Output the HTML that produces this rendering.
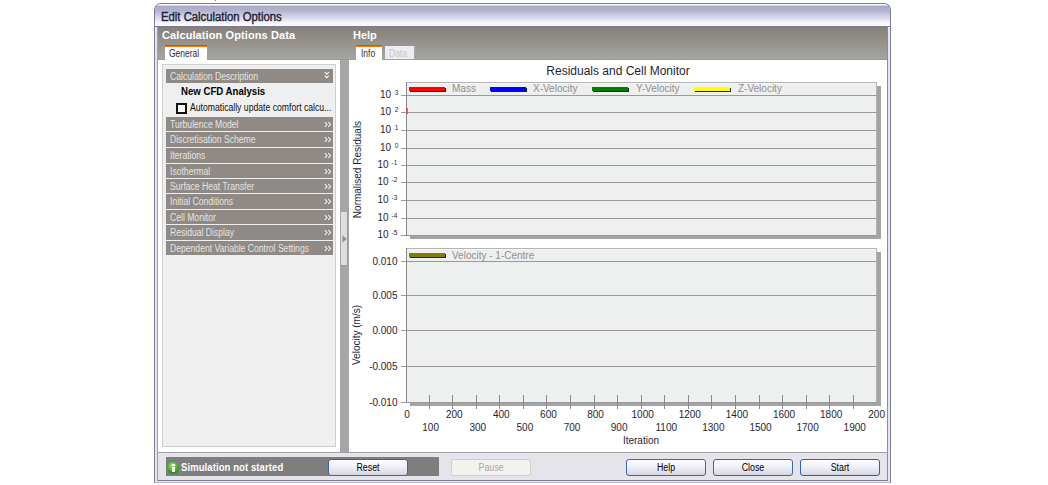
<!DOCTYPE html>
<html><head><meta charset="utf-8">
<style>
*{margin:0;padding:0;box-sizing:border-box}
html,body{width:1048px;height:485px;background:#fff;overflow:hidden;font-family:"Liberation Sans",sans-serif}
.a{position:absolute}
.t{white-space:nowrap;transform-origin:0 0;line-height:1}
.bar{position:absolute;left:166px;width:167px;background:#8f8a85}
.btn{position:absolute;top:459px;height:17px;width:80px;border:1px solid #3a68a0;border-radius:3px;background:linear-gradient(#fdfdff,#f0f0f8 45%,#dcdce8 90%,#cfd0de)}
.btn span{position:absolute;left:0;right:0;top:3px;text-align:center;font-size:10px;color:#000;line-height:1}
</style></head><body>
<div class="a" style="left:154px;top:3px;width:737px;height:480px;border:1px solid #7c7c98;border-bottom-color:#b8b8c4;border-radius:7px 7px 0 0;background:#e6e6ee"></div>
<div class="a" style="left:157px;top:26px;width:731px;height:455px;border-left:1px solid #9a9ab0;border-right:1px solid #8a8aa2;border-bottom:1px solid #7c7c98;background:#e4e4ea"></div>
<div class="a" style="left:155px;top:4px;width:735px;height:22px;border-radius:6px 6px 0 0;background:linear-gradient(#fdfdff,#fdfdff 1px,#a9a9c8 2px,#b4b4d0 30%,#d8d8e8 62%,#f6f6fa 85%,#fbfbfd)"></div>
<div class="a" style="left:155px;top:26px;width:735px;height:1px;background:#7a7a98"></div>
<div class="a t" style="left:161px;top:10.5px;font-size:12.5px;font-weight:normal;color:#25253a;transform:scaleX(0.905);-webkit-text-stroke:0.45px #25253a;letter-spacing:0px">Edit Calculation Options</div>
<div class="a" style="left:158px;top:27px;width:729px;height:426px;background:linear-gradient(#867f79,#9a9793 20px,#a8a7a4 34px,#a8a7a4)"></div>
<div class="a" style="left:158px;top:59px;width:729px;height:1px;background:#9a9996"></div>
<div class="a t" style="left:162px;top:30px;font-size:11px;font-weight:bold;color:#fff;transform:scaleX(1.0);letter-spacing:0.1px">Calculation Options Data</div>
<div class="a t" style="left:353px;top:30px;font-size:11px;font-weight:bold;color:#fff;transform:scaleX(1.0);">Help</div>
<div class="a" style="left:165px;top:45px;width:42px;height:15px;background:linear-gradient(#ff2400,#ff5a00 1px,#ff9000 2px,#fff 2px,#fff 3px)"></div>
<div class="a t" style="left:169px;top:49px;font-size:10px;font-weight:normal;color:#2a2a40;transform:scaleX(0.85);">General</div>
<div class="a" style="left:158px;top:60px;width:182px;height:392px;background:#fff"></div>
<div class="a" style="left:162px;top:64px;width:174px;height:383px;background:#efefef;border:1px solid #cfcfcf"></div>
<div class="bar" style="top:69px;height:14px"></div>
<div class="a t" style="left:170px;top:72px;font-size:10px;font-weight:normal;color:#e6e4e2;transform:scaleX(0.86);">Calculation Description</div>
<svg class="a" style="left:324px;top:71px" width="6" height="8"><path d="M0.8 1.2 L2.8 3.2 L4.8 1.2 M0.8 4.6 L2.8 6.6 L4.8 4.6" stroke="#fbfbfb" stroke-width="1.1" fill="none"/></svg>
<div class="a t" style="left:181px;top:86px;font-size:11px;font-weight:bold;color:#000;transform:scaleX(0.875);">New CFD Analysis</div>
<div class="a" style="left:176px;top:103px;width:11px;height:11px;border:2px solid #111;background:#fff"></div>
<div class="a t" style="left:190px;top:103px;font-size:10px;font-weight:normal;color:#111;transform:scaleX(0.865);">Automatically update comfort calcu...</div>
<div class="bar" style="top:117px;height:14px"></div>
<div class="a t" style="left:170px;top:120px;font-size:10px;font-weight:normal;color:#e6e4e2;transform:scaleX(0.86);">Turbulence Model</div>
<svg class="a" style="left:324px;top:121px" width="8" height="7"><path d="M0.8 1 L3 3.5 L0.8 6 M4.3 1 L6.5 3.5 L4.3 6" stroke="#fbfbfb" stroke-width="1.1" fill="none"/></svg>
<div class="bar" style="top:132px;height:15px"></div>
<div class="a t" style="left:170px;top:135px;font-size:10px;font-weight:normal;color:#e6e4e2;transform:scaleX(0.86);">Discretisation Scheme</div>
<svg class="a" style="left:324px;top:136px" width="8" height="7"><path d="M0.8 1 L3 3.5 L0.8 6 M4.3 1 L6.5 3.5 L4.3 6" stroke="#fbfbfb" stroke-width="1.1" fill="none"/></svg>
<div class="bar" style="top:148px;height:15px"></div>
<div class="a t" style="left:170px;top:151px;font-size:10px;font-weight:normal;color:#e6e4e2;transform:scaleX(0.86);">Iterations</div>
<svg class="a" style="left:324px;top:152px" width="8" height="7"><path d="M0.8 1 L3 3.5 L0.8 6 M4.3 1 L6.5 3.5 L4.3 6" stroke="#fbfbfb" stroke-width="1.1" fill="none"/></svg>
<div class="bar" style="top:164px;height:14px"></div>
<div class="a t" style="left:170px;top:167px;font-size:10px;font-weight:normal;color:#e6e4e2;transform:scaleX(0.86);">Isothermal</div>
<svg class="a" style="left:324px;top:168px" width="8" height="7"><path d="M0.8 1 L3 3.5 L0.8 6 M4.3 1 L6.5 3.5 L4.3 6" stroke="#fbfbfb" stroke-width="1.1" fill="none"/></svg>
<div class="bar" style="top:179px;height:14px"></div>
<div class="a t" style="left:170px;top:182px;font-size:10px;font-weight:normal;color:#e6e4e2;transform:scaleX(0.86);">Surface Heat Transfer</div>
<svg class="a" style="left:324px;top:183px" width="8" height="7"><path d="M0.8 1 L3 3.5 L0.8 6 M4.3 1 L6.5 3.5 L4.3 6" stroke="#fbfbfb" stroke-width="1.1" fill="none"/></svg>
<div class="bar" style="top:194px;height:15px"></div>
<div class="a t" style="left:170px;top:197px;font-size:10px;font-weight:normal;color:#e6e4e2;transform:scaleX(0.86);">Initial Conditions</div>
<svg class="a" style="left:324px;top:198px" width="8" height="7"><path d="M0.8 1 L3 3.5 L0.8 6 M4.3 1 L6.5 3.5 L4.3 6" stroke="#fbfbfb" stroke-width="1.1" fill="none"/></svg>
<div class="bar" style="top:210px;height:14px"></div>
<div class="a t" style="left:170px;top:213px;font-size:10px;font-weight:normal;color:#e6e4e2;transform:scaleX(0.86);">Cell Monitor</div>
<svg class="a" style="left:324px;top:214px" width="8" height="7"><path d="M0.8 1 L3 3.5 L0.8 6 M4.3 1 L6.5 3.5 L4.3 6" stroke="#fbfbfb" stroke-width="1.1" fill="none"/></svg>
<div class="bar" style="top:225px;height:15px"></div>
<div class="a t" style="left:170px;top:228px;font-size:10px;font-weight:normal;color:#e6e4e2;transform:scaleX(0.86);">Residual Display</div>
<svg class="a" style="left:324px;top:229px" width="8" height="7"><path d="M0.8 1 L3 3.5 L0.8 6 M4.3 1 L6.5 3.5 L4.3 6" stroke="#fbfbfb" stroke-width="1.1" fill="none"/></svg>
<div class="bar" style="top:241px;height:14px"></div>
<div class="a t" style="left:170px;top:244px;font-size:10px;font-weight:normal;color:#e6e4e2;transform:scaleX(0.86);">Dependent Variable Control Settings</div>
<svg class="a" style="left:324px;top:245px" width="8" height="7"><path d="M0.8 1 L3 3.5 L0.8 6 M4.3 1 L6.5 3.5 L4.3 6" stroke="#fbfbfb" stroke-width="1.1" fill="none"/></svg>
<div class="a" style="left:340px;top:60px;width:9px;height:392px;background:#a6a6a6"></div>
<div class="a" style="left:341px;top:212px;width:7px;height:54px;background:#dddde2;border-right:1px solid #9a9a9a;border-bottom:1px solid #9a9a9a"></div>
<svg class="a" style="left:342px;top:235px" width="5" height="8"><path d="M0.5 0.5 L4.5 4 L0.5 7.5 Z" fill="#8a8a8a"/></svg>
<div class="a" style="left:356px;top:45px;width:26px;height:15px;background:linear-gradient(#ff2400,#ff5a00 1px,#ff9000 2px,#fff 2px,#fff 3px)"></div>
<div class="a t" style="left:361px;top:49px;font-size:10px;font-weight:normal;color:#34344a;transform:scaleX(0.85);">Info</div>
<div class="a" style="left:385px;top:46px;width:31px;height:14px;background:#ededf1;border-right:2px solid #a4a4a4;border-bottom:1px solid #a4a4a4"></div>
<div class="a t" style="left:389px;top:49px;font-size:10px;font-weight:normal;color:#c4c4ca;transform:scaleX(0.85);">Data</div>
<div class="a" style="left:349px;top:60px;width:538px;height:392px;background:#fff"></div>
<div class="a" style="left:157px;top:452px;width:731px;height:1px;background:#a0a0a8"></div>
<svg class="a" style="left:0;top:0" width="1048" height="485" font-family="Liberation Sans, sans-serif" shape-rendering="crispEdges">
<text x="618" y="75" font-size="12" text-anchor="middle" fill="#1e1e36" shape-rendering="auto">Residuals and Cell Monitor</text>
<rect x="410" y="235" width="471" height="4" fill="#a4a4a4"/>
<rect x="877" y="86" width="4" height="153" fill="#a4a4a4"/>
<rect x="406" y="82" width="471" height="153" fill="#eef0ef"/>
<rect x="406" y="82" width="471" height="1" fill="#b4b4b4"/>
<rect x="407" y="83" width="470" height="1" fill="#f6f6f6"/>
<rect x="876" y="82" width="1" height="153" fill="#b4b4b4"/>
<rect x="401" y="95" width="476" height="1" fill="#999999"/>
<text x="391.2" y="98.0" font-size="10" text-anchor="end" fill="#1e1e36" shape-rendering="auto">10</text>
<text x="394.7" y="94.7" font-size="6.5" fill="#1e1e36" shape-rendering="auto">3</text>
<rect x="401" y="112" width="476" height="1" fill="#999999"/>
<text x="391.2" y="115.0" font-size="10" text-anchor="end" fill="#1e1e36" shape-rendering="auto">10</text>
<text x="394.7" y="111.7" font-size="6.5" fill="#1e1e36" shape-rendering="auto">2</text>
<rect x="401" y="130" width="476" height="1" fill="#999999"/>
<text x="391.2" y="133.0" font-size="10" text-anchor="end" fill="#1e1e36" shape-rendering="auto">10</text>
<text x="394.7" y="129.7" font-size="6.5" fill="#1e1e36" shape-rendering="auto">1</text>
<rect x="401" y="148" width="476" height="1" fill="#999999"/>
<text x="391.2" y="151.0" font-size="10" text-anchor="end" fill="#1e1e36" shape-rendering="auto">10</text>
<text x="394.7" y="147.7" font-size="6.5" fill="#1e1e36" shape-rendering="auto">0</text>
<rect x="401" y="165" width="476" height="1" fill="#999999"/>
<text x="388.7" y="168.0" font-size="10" text-anchor="end" fill="#1e1e36" shape-rendering="auto">10</text>
<text x="391.5" y="164.7" font-size="6.5" fill="#1e1e36" shape-rendering="auto">-1</text>
<rect x="401" y="182" width="476" height="1" fill="#999999"/>
<text x="388.7" y="185.0" font-size="10" text-anchor="end" fill="#1e1e36" shape-rendering="auto">10</text>
<text x="391.5" y="181.7" font-size="6.5" fill="#1e1e36" shape-rendering="auto">-2</text>
<rect x="401" y="200" width="476" height="1" fill="#999999"/>
<text x="388.7" y="203.0" font-size="10" text-anchor="end" fill="#1e1e36" shape-rendering="auto">10</text>
<text x="391.5" y="199.7" font-size="6.5" fill="#1e1e36" shape-rendering="auto">-3</text>
<rect x="401" y="218" width="476" height="1" fill="#999999"/>
<text x="388.7" y="221.0" font-size="10" text-anchor="end" fill="#1e1e36" shape-rendering="auto">10</text>
<text x="391.5" y="217.7" font-size="6.5" fill="#1e1e36" shape-rendering="auto">-4</text>
<rect x="401" y="235" width="476" height="1" fill="#999999"/>
<text x="388.7" y="238.0" font-size="10" text-anchor="end" fill="#1e1e36" shape-rendering="auto">10</text>
<text x="391.5" y="234.7" font-size="6.5" fill="#1e1e36" shape-rendering="auto">-5</text>
<rect x="406" y="82" width="1" height="154" fill="#868686"/>
<rect x="406" y="108" width="2" height="6" fill="#ec4a4a" fill-opacity="0.9"/>
<rect x="410" y="88" width="36" height="4" fill="#202020"/>
<rect x="409" y="87" width="36" height="4" fill="#ff0000"/>
<text x="452" y="92" font-size="10" fill="#8e8e8e" shape-rendering="auto">Mass</text>
<rect x="491" y="88" width="36" height="4" fill="#202020"/>
<rect x="490" y="87" width="36" height="4" fill="#0000ff"/>
<text x="533" y="92" font-size="10" fill="#8e8e8e" shape-rendering="auto">X-Velocity</text>
<rect x="593" y="88" width="36" height="4" fill="#202020"/>
<rect x="592" y="87" width="36" height="4" fill="#008000"/>
<text x="636" y="92" font-size="10" fill="#8e8e8e" shape-rendering="auto">Y-Velocity</text>
<rect x="695" y="88" width="36" height="4" fill="#202020"/>
<rect x="694" y="87" width="36" height="4" fill="#ffff00"/>
<text x="738" y="92" font-size="10" fill="#8e8e8e" shape-rendering="auto">Z-Velocity</text>
<text x="360.5" y="169.5" font-size="10" text-anchor="middle" fill="#1e1e36" transform="rotate(-90 360.5 169.5)" shape-rendering="auto">Normalised Residuals</text>
<rect x="410" y="402" width="471" height="4" fill="#a4a4a4"/>
<rect x="877" y="252" width="4" height="154" fill="#a4a4a4"/>
<rect x="406" y="248" width="471" height="154" fill="#eef0ef"/>
<rect x="406" y="248" width="471" height="1" fill="#b4b4b4"/>
<rect x="407" y="249" width="470" height="1" fill="#f6f6f6"/>
<rect x="876" y="248" width="1" height="154" fill="#b4b4b4"/>
<rect x="401" y="261" width="476" height="1" fill="#999999"/>
<text x="397.5" y="264.5" font-size="10" text-anchor="end" fill="#1e1e36" shape-rendering="auto">0.010</text>
<rect x="401" y="295" width="476" height="1" fill="#999999"/>
<text x="397.5" y="298.5" font-size="10" text-anchor="end" fill="#1e1e36" shape-rendering="auto">0.005</text>
<rect x="401" y="330" width="476" height="1" fill="#999999"/>
<text x="397.5" y="333.5" font-size="10" text-anchor="end" fill="#1e1e36" shape-rendering="auto">0.000</text>
<rect x="401" y="366" width="476" height="1" fill="#999999"/>
<text x="397.5" y="369.5" font-size="10" text-anchor="end" fill="#1e1e36" shape-rendering="auto">-0.005</text>
<rect x="401" y="402" width="476" height="1" fill="#999999"/>
<text x="397.5" y="405.5" font-size="10" text-anchor="end" fill="#1e1e36" shape-rendering="auto">-0.010</text>
<rect x="406" y="248" width="1" height="154" fill="#868686"/>
<rect x="410" y="254" width="36" height="4" fill="#202020"/>
<rect x="409" y="253" width="36" height="4" fill="#808000"/>
<text x="452" y="258.7" font-size="10" fill="#8e8e8e" shape-rendering="auto">Velocity - 1-Centre</text>
<text x="360" y="335" font-size="10" text-anchor="middle" fill="#1e1e36" transform="rotate(-90 360 335)" shape-rendering="auto">Velocity (m/s)</text>
<text x="407.1" y="418" font-size="10" text-anchor="middle" fill="#1e1e36" shape-rendering="auto">0</text>
<rect x="429" y="395" width="1" height="14" fill="#8a8a8a"/>
<text x="430.66" y="431" font-size="10" text-anchor="middle" fill="#1e1e36" shape-rendering="auto">100</text>
<rect x="452" y="395" width="1" height="14" fill="#8a8a8a"/>
<text x="454.22" y="418" font-size="10" text-anchor="middle" fill="#1e1e36" shape-rendering="auto">200</text>
<rect x="476" y="395" width="1" height="14" fill="#8a8a8a"/>
<text x="477.78000000000003" y="431" font-size="10" text-anchor="middle" fill="#1e1e36" shape-rendering="auto">300</text>
<rect x="499" y="395" width="1" height="14" fill="#8a8a8a"/>
<text x="501.34000000000003" y="418" font-size="10" text-anchor="middle" fill="#1e1e36" shape-rendering="auto">400</text>
<rect x="523" y="395" width="1" height="14" fill="#8a8a8a"/>
<text x="524.9" y="431" font-size="10" text-anchor="middle" fill="#1e1e36" shape-rendering="auto">500</text>
<rect x="546" y="395" width="1" height="14" fill="#8a8a8a"/>
<text x="548.46" y="418" font-size="10" text-anchor="middle" fill="#1e1e36" shape-rendering="auto">600</text>
<rect x="570" y="395" width="1" height="14" fill="#8a8a8a"/>
<text x="572.02" y="431" font-size="10" text-anchor="middle" fill="#1e1e36" shape-rendering="auto">700</text>
<rect x="594" y="395" width="1" height="14" fill="#8a8a8a"/>
<text x="595.58" y="418" font-size="10" text-anchor="middle" fill="#1e1e36" shape-rendering="auto">800</text>
<rect x="617" y="395" width="1" height="14" fill="#8a8a8a"/>
<text x="619.14" y="431" font-size="10" text-anchor="middle" fill="#1e1e36" shape-rendering="auto">900</text>
<rect x="641" y="395" width="1" height="14" fill="#8a8a8a"/>
<text x="642.7" y="418" font-size="10" text-anchor="middle" fill="#1e1e36" shape-rendering="auto">1000</text>
<rect x="664" y="395" width="1" height="14" fill="#8a8a8a"/>
<text x="666.26" y="431" font-size="10" text-anchor="middle" fill="#1e1e36" shape-rendering="auto">1100</text>
<rect x="688" y="395" width="1" height="14" fill="#8a8a8a"/>
<text x="689.8199999999999" y="418" font-size="10" text-anchor="middle" fill="#1e1e36" shape-rendering="auto">1200</text>
<rect x="711" y="395" width="1" height="14" fill="#8a8a8a"/>
<text x="713.38" y="431" font-size="10" text-anchor="middle" fill="#1e1e36" shape-rendering="auto">1300</text>
<rect x="735" y="395" width="1" height="14" fill="#8a8a8a"/>
<text x="736.94" y="418" font-size="10" text-anchor="middle" fill="#1e1e36" shape-rendering="auto">1400</text>
<rect x="759" y="395" width="1" height="14" fill="#8a8a8a"/>
<text x="760.5" y="431" font-size="10" text-anchor="middle" fill="#1e1e36" shape-rendering="auto">1500</text>
<rect x="782" y="395" width="1" height="14" fill="#8a8a8a"/>
<text x="784.06" y="418" font-size="10" text-anchor="middle" fill="#1e1e36" shape-rendering="auto">1600</text>
<rect x="806" y="395" width="1" height="14" fill="#8a8a8a"/>
<text x="807.62" y="431" font-size="10" text-anchor="middle" fill="#1e1e36" shape-rendering="auto">1700</text>
<rect x="829" y="395" width="1" height="14" fill="#8a8a8a"/>
<text x="831.1800000000001" y="418" font-size="10" text-anchor="middle" fill="#1e1e36" shape-rendering="auto">1800</text>
<rect x="853" y="395" width="1" height="14" fill="#8a8a8a"/>
<text x="854.74" y="431" font-size="10" text-anchor="middle" fill="#1e1e36" shape-rendering="auto">1900</text>
<text x="885" y="418" font-size="10" text-anchor="end" fill="#1e1e36" shape-rendering="auto">200</text>
<text x="641" y="444" font-size="10" text-anchor="middle" fill="#1e1e36" shape-rendering="auto">Iteration</text>
</svg>
<div class="a" style="left:166px;top:457px;width:273px;height:19px;background:#7e7e7e"></div>
<div class="a" style="left:167px;top:462px;width:12px;height:12px;border-radius:50%;background:radial-gradient(circle at 45% 30%,#a8ec80,#4cb22a 45%,#2a8a14 75%,#1e6c0c)"></div>
<div class="a" style="left:171.5px;top:463.5px;width:3px;height:2px;background:#fff"></div><div class="a" style="left:171.5px;top:466.5px;width:3px;height:5px;background:#fff"></div>
<div class="a t" style="left:181px;top:462.3px;font-size:10.5px;font-weight:bold;color:#fff;transform:scaleX(0.905);letter-spacing:0.1px">Simulation not started</div>
<div class="btn" style="left:328px"><span style="transform:scaleX(0.88)">Reset</span></div>
<div class="btn" style="left:451px;border-color:#cdd0c6;background:#f2f2ee"><span style="transform:scaleX(0.88);color:#a8a8a8">Pause</span></div>
<div class="btn" style="left:626px"><span style="transform:scaleX(0.88)">Help</span></div>
<div class="btn" style="left:713px"><span style="transform:scaleX(0.88)">Close</span></div>
<div class="btn" style="left:800px;border-color:#2f62a8"><span style="transform:scaleX(0.88)">Start</span></div>
<div class="a" style="left:215px;top:0;width:1px;height:1px;background:#777"></div>
</body></html>
